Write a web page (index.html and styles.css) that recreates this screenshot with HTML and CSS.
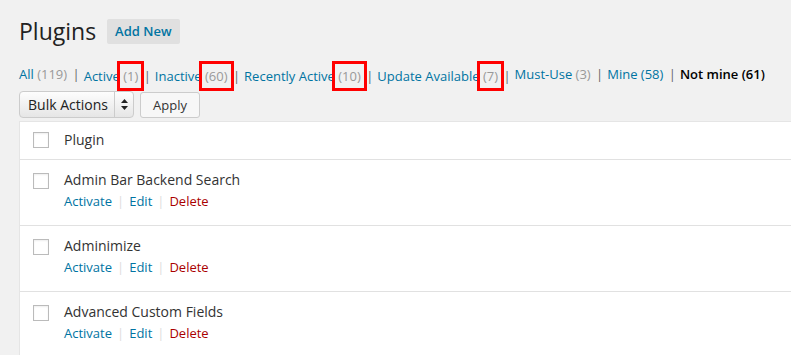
FILE: index.html
```html
<!DOCTYPE html>
<html lang="en">
<head>
    <meta charset="UTF-8"/>
    <title>Plugins</title>
    <link rel="stylesheet" href="styles.css">
</head>
<body>

<div class="wrap">
    <div class="page-title">
        <h2>Plugins</h2>
        <a class="add-new" href="#">Add New</a>
    </div>

    <ul class="subsubsub">
        <li><a href="#">All <span class="count">(119)</span></a> |</li>
        <li><a href="#">Active <span class="count marked">(1)</span></a> |</li>
        <li><a href="#">Inactive <span class="count marked">(60)</span></a> |</li>
        <li><a href="#">Recently Active <span class="count marked">(10)</span></a> |</li>
        <li><a href="#">Update Available <span class="count marked">(7)</span></a> |</li>
        <li><a href="#">Must-Use <span class="count">(3)</span></a> |</li>
        <li><a href="#">Mine (58)</a> |</li>
        <li><a href="#" class="current">Not mine <span class="count">(61)</span></a></li>
    </ul>

    <div class="tablenav">
        <div class="select">
            <span>Bulk Actions</span>
            <span class="arrows">
                <svg width="7" height="11" viewBox="0 0 7 11"><path d="M3.5 0 L7 4 H0 Z M3.5 11 L7 7 H0 Z" fill="#222"/></svg>
            </span>
        </div>
        <button class="button">Apply</button>
    </div>

    <div class="plugins">
        <div class="row head">
            <span class="check"></span>
            <span class="name">Plugin</span>
        </div>
        <div class="row">
            <span class="check"></span>
            <div>
                <div class="name">Admin Bar Backend Search</div>
                <div class="actions"><a href="#">Activate</a><i>|</i><a href="#">Edit</a><i>|</i><a href="#" class="delete">Delete</a></div>
            </div>
        </div>
        <div class="row">
            <span class="check"></span>
            <div>
                <div class="name">Adminimize</div>
                <div class="actions"><a href="#">Activate</a><i>|</i><a href="#">Edit</a><i>|</i><a href="#" class="delete">Delete</a></div>
            </div>
        </div>
        <div class="row">
            <span class="check"></span>
            <div>
                <div class="name">Advanced Custom Fields</div>
                <div class="actions"><a href="#">Activate</a><i>|</i><a href="#">Edit</a><i>|</i><a href="#" class="delete">Delete</a></div>
            </div>
        </div>
    </div>
</div>

</body>
</html>
```

FILE: styles.css
```css
* {
    margin: 0;
    padding: 0;
    box-sizing: border-box;
}

body {
    font-family: 'Open Sans', sans-serif;
    font-size: 13px;
    background: #f1f1f1;
    color: #444;
    overflow: hidden;
}

a {
    color: #0074a2;
    text-decoration: none;
}

.wrap {
    padding: 17px 0 0 19px;
}

/* TITULO */
.page-title {
    display: flex;
    align-items: center;
    gap: 11px;
}

.page-title h2 {
    font-size: 23px;
    font-weight: 400;
    color: #222;
    line-height: 29px;
}

.add-new {
    background: #e0e0e0;
    font-weight: 600;
    padding: 4px 8px;
    border-radius: 2px;
    line-height: 17px;
}

/* FILTROS */
.subsubsub {
    list-style: none;
    display: flex;
    gap: 4px;
    margin-top: 15px;
    line-height: 26px;
    color: #666;
    white-space: nowrap;
}

.subsubsub li a {
    margin-right: 2px;
}

.subsubsub .count {
    color: #999;
}

.subsubsub .current,
.subsubsub .current .count {
    color: #000;
    font-weight: 600;
}

.count.marked {
    display: inline-block;
    line-height: 18px;
    padding: 3px 3px;
    margin: 0 -6px;
    border: 3px solid #ff0000;
}

/* ACCIONES EN LOTE */
.tablenav {
    display: flex;
    gap: 6px;
    margin-top: 0;
}

.select {
    display: flex;
    align-items: center;
    width: 115px;
    height: 27px;
    border: 1px solid #ccc;
    border-radius: 4px;
    background: linear-gradient(#fdfdfd, #e6e6e6);
    color: #222;
    font-size: 14px;
}

.select span:first-child {
    flex: 1;
    padding-left: 8px;
}

.select .arrows {
    width: 19px;
    height: 100%;
    border-left: 1px solid #ccc;
    display: flex;
    align-items: center;
    justify-content: center;
}

.button {
    font-family: inherit;
    font-size: 13px;
    color: #333;
    background: #f7f7f7;
    border: 1px solid #ccc;
    border-radius: 3px;
    height: 26px;
    padding: 0 12px;
    margin-top: 1px;
}

/* TABLA */
.plugins {
    margin-top: 3px;
    background: #fff;
    border: 1px solid #e5e5e5;
    border-right: none;
}

.row {
    display: flex;
    align-items: flex-start;
    gap: 15px;
    padding: 12px 0 0 13px;
    height: 66px;
    border-top: 1px solid #e1e1e1;
    font-size: 14px;
    color: #333;
}

.row.head {
    border-top: none;
    height: 37px;
    padding-top: 9px;
    align-items: center;
    padding-bottom: 10px;
}

.check {
    width: 16px;
    height: 16px;
    border: 1px solid #bbb;
    background: #fff;
    flex-shrink: 0;
    box-shadow: inset 0 1px 2px rgba(0, 0, 0, 0.07);
}

.row:not(.head) .check {
    margin-top: 1px;
}

.row .name {
    line-height: 18px;
    margin-top: -1px;
}

.actions {
    margin-top: 3px;
    font-size: 13px;
}

.actions i {
    font-style: normal;
    color: #ddd;
    margin: 0 5px;
}

.actions .delete {
    color: #a00;
}
```
